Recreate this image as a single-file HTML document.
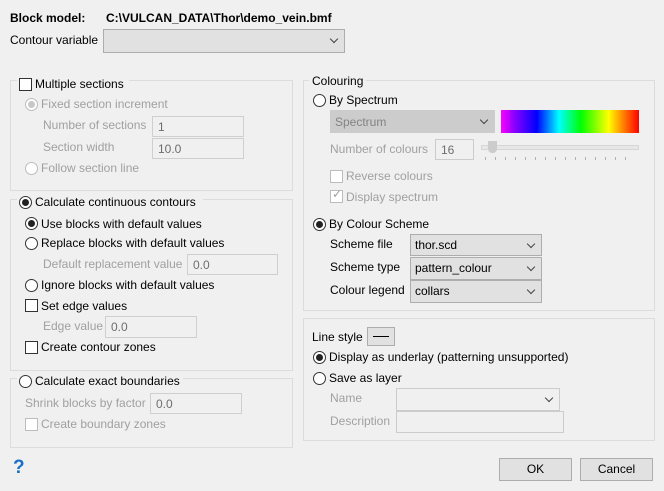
<!DOCTYPE html>
<html><head><style>
body{margin:0;width:664px;height:491px;background:#f0f0f0;font-family:"Liberation Sans",sans-serif;font-size:12px;color:#000;position:relative;overflow:hidden}
.a{position:absolute;white-space:nowrap;line-height:14px}
.g{position:absolute;border:1px solid #dcdcdc}
.d{color:#a0a0a0}
.in{position:absolute;background:#f0f0f0;border:1px solid #cfcfcf;box-sizing:border-box;color:#6d6d6d;padding:3px 0 0 5px;line-height:14px}
.cb{position:absolute;background:#e1e1e1;border:1px solid #adadad;box-sizing:border-box;padding:3px 0 0 4px;line-height:14px}
.cb:after{content:"";position:absolute;right:7px;top:6px;width:5px;height:5px;border-right:1px solid #444;border-bottom:1px solid #444;transform:rotate(45deg)}
.rd{position:absolute;width:13px;height:13px;border:1px solid #333;border-radius:50%;box-sizing:border-box;background:#fff}
.rd.on:after{content:"";position:absolute;left:2px;top:2px;width:7px;height:7px;border-radius:50%;background:#222}
.rd.dis{border-color:#bcbcbc}
.rd.dis.on:after{background:#c8c8c8}
.ck{position:absolute;width:13px;height:13px;border:1px solid #333;box-sizing:border-box;background:#fff}
.ck.dis{border-color:#bcbcbc}
.btn{position:absolute;background:#e1e1e1;border:1px solid #adadad;box-sizing:border-box;text-align:center;line-height:20px}
</style></head><body>
<div class="a" style="left:10px;top:11px;font-weight:bold">Block model:</div>
<div class="a" style="left:106px;top:11px;font-weight:bold">C:\VULCAN_DATA\Thor\demo_vein.bmf</div>
<div class="a" style="left:10px;top:33px">Contour variable</div>
<div class="cb" style="left:103px;top:29px;width:242px;height:24px"></div>

<div class="g" style="left:10px;top:80px;width:281px;height:109px"></div>
<div class="a" style="left:17px;top:76px;background:#f0f0f0;width:112px;height:16px"></div>
<div class="ck" style="left:19px;top:78px"></div>
<div class="a" style="left:35px;top:77px">Multiple sections</div>
<div class="rd dis on" style="left:25px;top:98px"></div>
<div class="a d" style="left:41px;top:97px">Fixed section increment</div>
<div class="a d" style="left:43px;top:118px">Number of sections</div>
<div class="in" style="left:152px;top:116px;width:92px;height:21px">1</div>
<div class="a d" style="left:43px;top:140px">Section width</div>
<div class="in" style="left:152px;top:138px;width:92px;height:21px">10.0</div>
<div class="rd dis" style="left:25px;top:162px"></div>
<div class="a d" style="left:41px;top:161px">Follow section line</div>

<div class="g" style="left:10px;top:199px;width:281px;height:170px"></div>
<div class="a" style="left:17px;top:195px;background:#f0f0f0;width:186px;height:16px"></div>
<div class="rd on" style="left:19px;top:196px"></div>
<div class="a" style="left:35px;top:195px">Calculate continuous contours</div>
<div class="rd on" style="left:25px;top:217px"></div>
<div class="a" style="left:41px;top:217px">Use blocks with default values</div>
<div class="rd" style="left:25px;top:237px"></div>
<div class="a" style="left:41px;top:236px">Replace blocks with default values</div>
<div class="a d" style="left:43px;top:257px">Default replacement value</div>
<div class="in" style="left:187px;top:254px;width:91px;height:21px">0.0</div>
<div class="rd" style="left:25px;top:279px"></div>
<div class="a" style="left:41px;top:278px">Ignore blocks with default values</div>
<div class="ck" style="left:25px;top:299px"></div>
<div class="a" style="left:41px;top:299px">Set edge values</div>
<div class="a d" style="left:43px;top:319px">Edge value</div>
<div class="in" style="left:105px;top:316px;width:92px;height:22px">0.0</div>
<div class="ck" style="left:25px;top:341px"></div>
<div class="a" style="left:41px;top:340px">Create contour zones</div>

<div class="g" style="left:10px;top:378px;width:281px;height:68px"></div>
<div class="a" style="left:17px;top:374px;background:#f0f0f0;width:166px;height:16px"></div>
<div class="rd" style="left:19px;top:375px"></div>
<div class="a" style="left:35px;top:374px">Calculate exact boundaries</div>
<div class="a d" style="left:25px;top:396px">Shrink blocks by factor</div>
<div class="in" style="left:150px;top:393px;width:92px;height:21px">0.0</div>
<div class="ck dis" style="left:25px;top:418px"></div>
<div class="a d" style="left:41px;top:417px">Create boundary zones</div>

<div class="a" style="left:13px;top:458px;color:#1a6fc4;font-weight:bold;font-size:19px;line-height:20px">?</div>

<div class="g" style="left:303px;top:80px;width:350px;height:229px"></div>
<div class="a" style="left:309px;top:74px;background:#f0f0f0;padding:0 3px">Colouring</div>
<div class="rd" style="left:313px;top:94px"></div>
<div class="a" style="left:329px;top:93px">By Spectrum</div>
<div class="cb" style="left:330px;top:110px;width:165px;height:23px;background:#ccc;border-color:#ccc;color:#838383"></div>
<div class="a" style="left:335px;top:115px;color:#838383">Spectrum</div>
<div style="position:absolute;left:501px;top:110px;width:138px;height:23px;background:linear-gradient(to right,#f0f 0%,#80f 10%,#00f 26%,#0ff 42%,#0f0 58%,#ff0 78%,#f80 88%,#f00 100%)"></div>
<div class="a d" style="left:330px;top:142px">Number of colours</div>
<div class="in" style="left:435px;top:139px;width:39px;height:21px;border-color:#ccc">16</div>
<div style="position:absolute;left:481px;top:145px;width:156px;height:3px;background:#e7e7e7;border:1px solid #d6d6d6"></div>
<div style="position:absolute;left:488px;top:141px;width:9px;height:12px;background:#ccc;border-radius:0 0 4px 4px"></div>
<div style="position:absolute;left:485px;top:157px;width:150px;height:3px;background:repeating-linear-gradient(to right,#b0b0b0 0 1px,transparent 1px 10px)"></div>
<div class="ck dis" style="left:330px;top:170px"></div>
<div class="a d" style="left:346px;top:169px">Reverse colours</div>
<div class="ck dis" style="left:330px;top:190px"></div>
<div class="a d" style="left:332px;top:187px">✓</div>
<div class="a d" style="left:346px;top:190px">Display spectrum</div>
<div class="rd on" style="left:313px;top:218px"></div>
<div class="a" style="left:329px;top:217px">By Colour Scheme</div>
<div class="a" style="left:330px;top:237px">Scheme file</div>
<div class="cb" style="left:410px;top:234px;width:132px;height:22px">thor.scd</div>
<div class="a" style="left:330px;top:260px">Scheme type</div>
<div class="cb" style="left:410px;top:257px;width:132px;height:23px">pattern_colour</div>
<div class="a" style="left:330px;top:283px">Colour legend</div>
<div class="cb" style="left:410px;top:280px;width:132px;height:23px">collars</div>

<div class="g" style="left:303px;top:318px;width:350px;height:121px"></div>
<div class="a" style="left:312px;top:330px">Line style</div>
<div style="position:absolute;left:367px;top:327px;width:28px;height:19px;border:1px solid #adadad;box-sizing:border-box;background:#e1e1e1"><div style="position:absolute;left:5px;top:8px;width:16px;height:1px;background:#000"></div></div>
<div class="rd on" style="left:313px;top:351px"></div>
<div class="a" style="left:329px;top:350px">Display as underlay (patterning unsupported)</div>
<div class="rd" style="left:313px;top:372px"></div>
<div class="a" style="left:329px;top:371px">Save as layer</div>
<div class="a d" style="left:330px;top:391px">Name</div>
<div class="cb" style="left:396px;top:388px;width:164px;height:23px;background:#f0f0f0;border-color:#ccc"></div>
<div class="a d" style="left:330px;top:414px">Description</div>
<div class="in" style="left:396px;top:411px;width:168px;height:22px;border-color:#ccc"></div>

<div class="btn" style="left:499px;top:458px;width:73px;height:23px">OK</div>
<div class="btn" style="left:580px;top:458px;width:73px;height:23px">Cancel</div>
</body></html>
